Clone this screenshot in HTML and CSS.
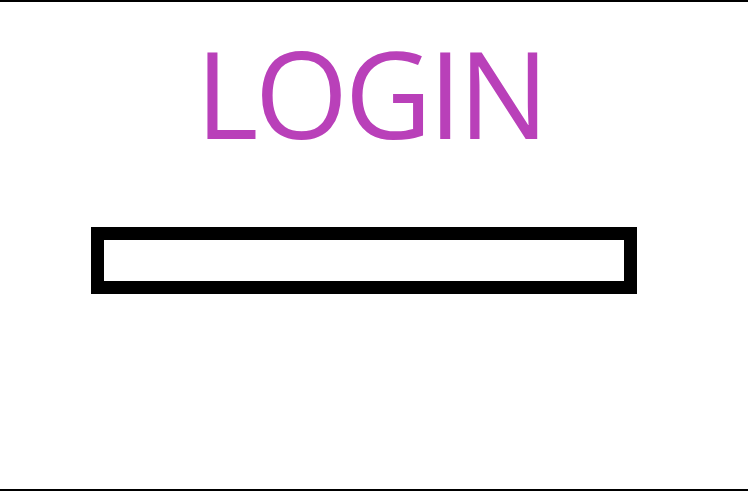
FILE: index.html
```html
<!DOCTYPE html>
<html>
<head>
<meta charset="utf-8">
<link rel="stylesheet" href="styles.css">
</head>
<body>
<main class="frame">
  <h1 class="title">LOGIN</h1>
  <div class="field-row">
    <input class="field" type="text" aria-label="username">
  </div>
</main>
</body>
</html>
```
FILE: styles.css
```css
html, body {
  margin: 0;
  padding: 0;
  background: #fff;
}
.frame {
  box-sizing: border-box;
  height: 491px;
  border-top: 2px solid #000;
  border-bottom: 2px solid #000;
  display: flex;
  flex-direction: column;
}
.title {
  margin: 0;
  padding-top: 16px;
  padding-right: 7px;
  text-align: center;
  font-family: "Open Sans", sans-serif;
  font-weight: 400;
  font-size: 120px;
  letter-spacing: -3.5px;
  line-height: 150px;
  color: #b940b9;
}
.field-row {
  padding-left: 91px;
  padding-top: 59px;
}
.field {
  display: block;
  box-sizing: border-box;
  width: 546px;
  height: 67px;
  margin: 0;
  border: 13px solid #000;
  padding: 0;
  background: #fff;
  outline: none;
}
```
